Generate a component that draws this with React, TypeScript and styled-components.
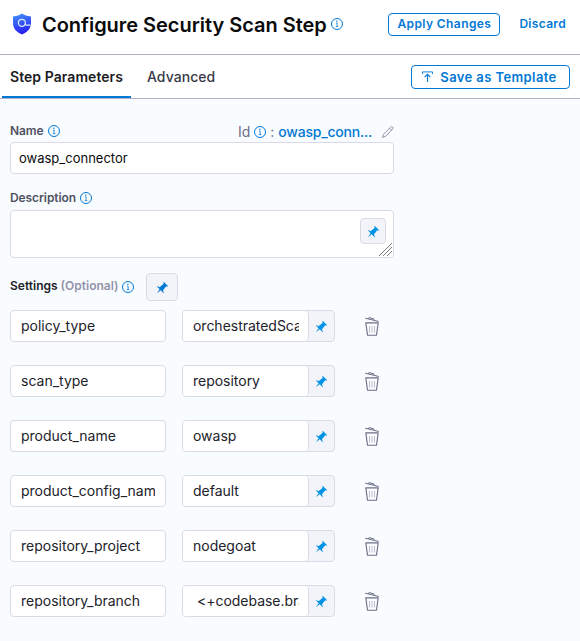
import React from "react";
import styled, { createGlobalStyle } from "styled-components";

const Global = createGlobalStyle`
  *, *::before, *::after { box-sizing: border-box; }
  html, body { margin: 0; height: 100%; background: #f9fcff; }
  body { font-family: Inter, "Liberation Sans", sans-serif; overflow: hidden; color: #22222a; }
  button, input, textarea { font-family: inherit; }
  svg { display: block; flex: none; }
`;

const BLUE = "#0278d5";

const Page = styled.div`
  width: 580px;
  height: 641px;
  background: #f9fcff;
`;

const Header = styled.header`
  display: flex;
  align-items: center;
  height: 55px;
  padding: 0 14px 6px 13px;
  background: #fff;
  border-bottom: 1px solid #b0b1c4;
`;

const Title = styled.h1`
  margin: 2px 4px 0 11px;
  font-size: 20px;
  line-height: 28px;
  font-weight: 600;
  letter-spacing: -0.03px;
  color: #0b0b0d;
  white-space: nowrap;
`;

const Button = styled.button<{ $wide?: boolean }>`
  display: flex;
  align-items: center;
  justify-content: center;
  width: ${(p) => (p.$wide ? 159 : 112)}px;
  height: ${(p) => (p.$wide ? 24 : 23)}px;
  padding: ${(p) => (p.$wide ? "0 2px 0 0" : "0 0 1px")};
  gap: 7px;
  margin-left: auto;
  border: 1px solid ${BLUE};
  border-radius: 4px;
  background: #fff;
  color: ${BLUE};
  font-size: ${(p) => (p.$wide ? 13 : 12)}px;
  font-weight: 600;
  letter-spacing: ${(p) => (p.$wide ? 0.4 : 0.4)}px;
  white-space: nowrap;
`;

const LinkButton = styled.button`
  padding: 0 0 1px;
  margin-left: 19px;
  border: 0;
  background: none;
  color: ${BLUE};
  font-size: 12px;
  font-weight: 600;
  letter-spacing: 0.32px;
`;

const Tabs = styled.nav`
  display: flex;
  align-items: flex-start;
  height: 44px;
  padding: 0 10px 0 2px;
  background: #fff;
  border-bottom: 1px solid #b0b1c4;
  & > ${Button} { margin-top: 10px; }
`;

const Tab = styled.a<{ $active?: boolean }>`
  height: 43px;
  padding: 0 8px;
  margin-right: 8px;
  font-size: 14px;
  line-height: 44px;
  font-weight: ${(p) => (p.$active ? 600 : 500)};
  letter-spacing: ${(p) => (p.$active ? 0.06 : 0.05)}px;
  white-space: nowrap;
  color: ${(p) => (p.$active ? "#1b1b22" : "#383946")};
  border-bottom: ${(p) => (p.$active ? `2px solid ${BLUE}` : "0")};
  border-radius: 2px 2px 0 0;
`;

const Form = styled.main`
  width: 394px;
  padding: 23px 0 0 10px;
`;

const LabelRow = styled.div<{ $height: number; $top?: number }>`
  display: flex;
  align-items: center;
  height: ${(p) => p.$height}px;
  padding-top: ${(p) => p.$top ?? 0}px;
`;

const NameLabel = styled.div`
  display: flex;
  align-items: center;
  padding-bottom: 2px;
`;

const Label = styled.label<{ $dark?: boolean }>`
  font-size: 12px;
  line-height: 16px;
  font-weight: 600;
  letter-spacing: ${(p) => (p.$dark ? 0 : -0.08)}px;
  white-space: nowrap;
  margin: ${(p) => (p.$dark ? "-2px 4px 0 0" : "0 4px 0 0")};
  color: ${(p) => (p.$dark ? "#22222a" : "#4f5162")};
`;

const Optional = styled.span`
  color: #9293ab;
`;

const Identifier = styled.div`
  display: flex;
  align-items: center;
  gap: 4px;
  margin-left: auto;
  padding-top: 1px;
  font-size: 14px;
  line-height: 16px;
  color: #6b6d85;
`;

const IdValue = styled.span`
  color: ${BLUE};
  font-weight: 500;
  letter-spacing: -0.22px;
  margin-right: 6px;
`;

const NameInput = styled.input`
  display: block;
  width: 384px;
  height: 32px;
  margin-top: 1px;
  padding: 0 8px;
  border: 1px solid #d9dae5;
  border-radius: 4px;
  background: #fff;
  color: #0b0b0d;
  font-size: 13px;
  outline: 0;
`;

const DescriptionBox = styled.div`
  display: flex;
  justify-content: flex-end;
  position: relative;
  height: 48px;
  padding: 7px 7px;
  border: 1px solid #d9dae5;
  border-radius: 4px;
  background: #fff;
`;

const Grip = styled.svg`
  position: absolute;
  right: 1px;
  bottom: 1px;
`;

const PinButton = styled.button<{ $w: number; $h: number; $gap?: number }>`
  display: flex;
  align-items: center;
  justify-content: center;
  width: ${(p) => p.$w}px;
  height: ${(p) => p.$h}px;
  margin-left: ${(p) => p.$gap ?? 0}px;
  padding: 0;
  border: 1px solid #d9dae5;
  border-radius: 4px;
  background: #f3f3fa;
`;

const Rows = styled.div`
  display: grid;
  row-gap: 23px;
  margin-top: 9px;
`;

const Row = styled.div`
  display: grid;
  grid-template-columns: 156px 153px 32px;
  column-gap: 16px;
  align-items: center;
  height: 32px;
`;

const KeyInput = styled.input`
  width: 100%;
  height: 32px;
  padding: 0 10px 1px;
  border: 1px solid #d9dae5;
  border-radius: 4px;
  background: #fff;
  color: #22222a;
  font-size: 14px;
  outline: 0;
`;

const ValueGroup = styled.div`
  display: flex;
  height: 32px;
  border: 1px solid #d9dae5;
  border-radius: 4px;
  background: #f3f3fa;
  overflow: hidden;
`;

const ValueCell = styled.div`
  width: 126px;
  height: 30px;
  padding: 0 9px 0 10px;
  border-right: 1px solid #d9dae5;
  border-radius: 0 4px 4px 0;
  background: #fff;
`;

const ValueInput = styled.input`
  display: block;
  width: 106px;
  height: 30px;
  padding: 0 0 1px;
  border: 0;
  background: transparent;
  color: #22222a;
  font-size: 14px;
  letter-spacing: -0.02px;
  outline: 0;
`;

const PinSlot = styled.span`
  display: flex;
  align-items: center;
  justify-content: center;
  width: 26px;
`;

const TrashButton = styled.button`
  justify-self: start;
  margin: 0 0 0 13px;
  padding: 0;
  border: 0;
  background: none;
`;

const Info = () => (
  <svg width="12" height="12" viewBox="0 0 12 12" fill="none">
    <circle cx="6" cy="6" r="5.5" stroke={BLUE} strokeWidth="1" />
    <path d="M5 5h1.1v3.5M4.8 8.6h2.5" stroke={BLUE} strokeWidth=".8" />
    <circle cx="5.9" cy="3.3" r=".7" fill={BLUE} />
  </svg>
);

const Pin = ({ color = "#0092e4" }: { color?: string }) => (
  <svg width="13" height="13" viewBox="0 0 16 16" fill={color}>
    <path d="M9.41.92c-.51.51-.41 1.5.15 2.56L4.34 7.54C2.8 6.48 1.45 6.05.92 6.58l3.54 3.54-3.54 4.95 4.95-3.54 3.54 3.54c.53-.53.1-1.88-.96-3.42l4.06-5.22c1.06.56 2.04.66 2.55.15L9.41.92z" />
  </svg>
);

const Shield = () => (
  <svg width="18" height="22" viewBox="0 0 18 22" fill="none">
    <defs>
      <linearGradient id="shield" x1="5" y1="0" x2="11" y2="22" gradientUnits="userSpaceOnUse">
        <stop stopColor="#4391fc" />
        <stop offset="1" stopColor="#2513f0" />
      </linearGradient>
    </defs>
    <path d="M9 .6C6.800 2.200 3.800 3.200 0 3.400V10c0 5.500 3.500 9.300 9 11.400 5.500-2.100 9-5.900 9-11.400V3.400C14.200 3.200 11.200 2.200 9 .6z" fill="url(#shield)" />
    <circle cx="8.900" cy="9.800" r="3.500" stroke="#dcebff" strokeWidth="1.300" />
    <path d="M11.500 11.200l1.700 1h4.300" stroke="#dcebff" strokeWidth="1.200" />
  </svg>
);

const Upload = () => (
  <svg width="11" height="12" viewBox="0 0 11 12" fill="none" stroke={BLUE}>
    <path d="M.5 3V.9h10V3" strokeWidth=".9" />
    <path d="M5.500 11V3.200M2.700 6l2.800-2.800L8.300 6" strokeWidth="1.100" />
  </svg>
);

const Pencil = () => (
  <svg width="12" height="12" viewBox="0 0 12 12" fill="none" stroke="#84869c" strokeWidth=".9" strokeLinejoin="round">
    <path d="M.6 11.400l.8-3L8.700 1.100c.6-.6 1.300-.6 1.900 0s.6 1.300 0 1.900L3.500 10.500z" />
    <path d="M7.600 2.200l2 2" />
  </svg>
);

const Trash = () => (
  <svg width="16" height="20" viewBox="0 0 16 20" fill="none" stroke="#6b6d85">
    <path d="M1.200 2.200l13.600 3.300" strokeWidth="1" />
    <path d="M4.500 2.800l.4-1.200 5 1.300-.2 1.100" strokeWidth="1" />
    <path d="M1.800 6.900h12.400l-1.700 12.300H3.500z" strokeWidth="1.100" strokeLinejoin="round" />
    <path d="M5.500 10v6.500M8 10v6.500M10.500 10v6.500" stroke="#b5b6c8" strokeWidth=".9" />
  </svg>
);

const settings = [
  ["policy_type", "orchestratedScan"],
  ["scan_type", "repository"],
  ["product_name", "owasp"],
  ["product_config_name", "default"],
  ["repository_project", "nodegoat"],
  ["repository_branch", " <+codebase.branch>"],
];

export default function App() {
  return (
    <Page>
      <Global />
      <Header>
        <Shield />
        <Title>Configure Security Scan Step</Title>
        <Info />
        <Button>Apply Changes</Button>
        <LinkButton>Discard</LinkButton>
      </Header>
      <Tabs>
        <Tab $active>Step Parameters</Tab>
        <Tab>Advanced</Tab>
        <Button $wide>
          <Upload />
          Save as Template
        </Button>
      </Tabs>
      <Form>
        <LabelRow $height={19}>
          <NameLabel>
            <Label>Name</Label>
            <Info />
          </NameLabel>
          <Identifier>
            Id <Info /> : <IdValue>owasp_conn...</IdValue>
            <Pencil />
          </Identifier>
        </LabelRow>
        <NameInput defaultValue="owasp_connector" />
        <LabelRow $height={36} $top={11}>
          <Label>Description</Label>
          <Info />
        </LabelRow>
        <DescriptionBox>
          <PinButton $w={26} $h={26}><Pin /></PinButton>
          <Grip width="13" height="13" viewBox="0 0 13 13" stroke="#777" strokeWidth="1">
            <path d="M0 13L13 0M4 13L13 4M8 13L13 8" />
          </Grip>
        </DescriptionBox>
        <LabelRow $height={43} $top={15}>
          <Label $dark>Settings <Optional>(Optional)</Optional></Label>
          <Info />
          <PinButton $w={32} $h={28} $gap={12}><Pin color={BLUE} /></PinButton>
        </LabelRow>
        <Rows>
          {settings.map(([key, value]) => (
            <Row key={key}>
              <KeyInput defaultValue={key} />
              <ValueGroup>
                <ValueCell>
                  <ValueInput defaultValue={value} />
                </ValueCell>
                <PinSlot><Pin /></PinSlot>
              </ValueGroup>
              <TrashButton><Trash /></TrashButton>
            </Row>
          ))}
        </Rows>
      </Form>
    </Page>
  );
}
